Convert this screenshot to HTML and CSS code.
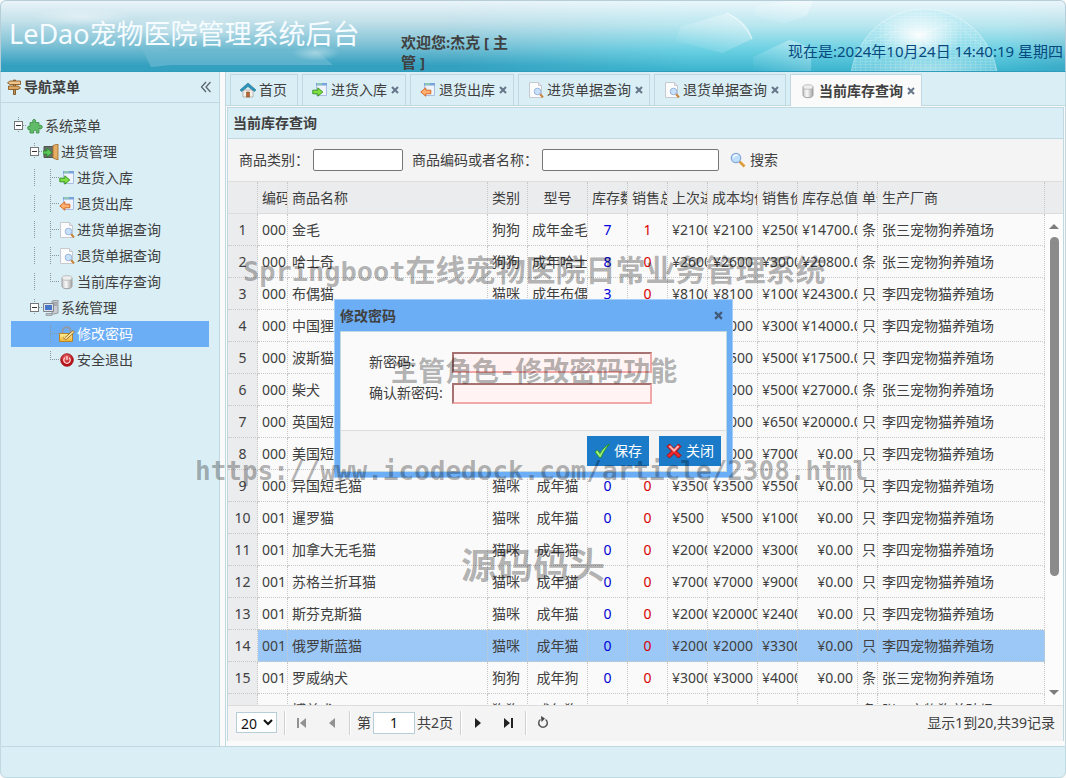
FILE: index.html
```html
<!DOCTYPE html>
<html lang="zh-CN">
<head>
<meta charset="utf-8">
<title>LeDao宠物医院管理系统后台</title>
<link rel="stylesheet" href="styles.css">
</head>
<body>
<svg class="defs" aria-hidden="true">
  <defs>
    <linearGradient id="g-cyl" x1="0" x2="1"><stop offset="0" stop-color="#c4c4c4"/><stop offset=".4" stop-color="#fafafa"/><stop offset="1" stop-color="#a2a2a2"/></linearGradient>
    <linearGradient id="g-lock" x1="0" y1="0" x2="0" y2="1"><stop offset="0" stop-color="#fff0a0"/><stop offset="1" stop-color="#eeb030"/></linearGradient>
    <radialGradient id="g-red" cx=".45" cy=".3"><stop offset="0" stop-color="#f07474"/><stop offset="1" stop-color="#b81018"/></radialGradient>
    <symbol id="i-sign" viewBox="0 0 16 16"><path d="M7.500 1h2v14.500h-2z" fill="#c89458" stroke="#704818" stroke-width=".8"/><path d="M4 2h10.500v3.500H4L1.500 3.800z" fill="#edc48a" stroke="#8a5a24" stroke-width=".9"/><path d="M2.500 7H12l2.500 1.800L12 10.500H2.500z" fill="#dca965" stroke="#8a5a24" stroke-width=".9"/></symbol>
    <symbol id="i-home" viewBox="0 0 16 16"><path d="M3 8h10v7H3z" fill="#f4f1ec" stroke="#b5b5b0"/><path d="M12 2h2v4h-2z" fill="#e8e8e8"/><path d="M8 1l8 7-1.500 1.500L8 4.500 1.500 9.500 0 8z" fill="#2c94b8" stroke="#1d7595" stroke-width=".6"/><path d="M6.500 10h3v5h-3z" fill="#b56b38" stroke="#8c4c1c" stroke-width=".6"/></symbol>
    <symbol id="i-in" viewBox="0 0 16 16"><path d="M4.500 1.500h10v12h-10z" fill="#eef3fc" stroke="#a9bfe2"/><path d="M4 1h11v2.500H4z" fill="#7aa2dd"/><path d="M5 1h5v2H5z" fill="#8cc8b0"/><path d="M.8 8.200h5V5.800l5 4.200-5 4.200v-2.400h-5z" fill="#80e040" stroke="#2a9018" stroke-width=".9"/></symbol>
    <symbol id="i-out" viewBox="0 0 16 16"><path d="M4.500 1.500h10v12h-10z" fill="#eef3fc" stroke="#a9bfe2"/><path d="M4 1h11v2.500H4z" fill="#7aa2dd"/><path d="M5 1h5v2H5z" fill="#8cc8b0"/><path d="M10.800 8.200h-5V5.800L.8 10l5 4.200v-2.400h5z" fill="#ffb070" stroke="#d2601a" stroke-width=".9"/></symbol>
    <symbol id="i-doc" viewBox="0 0 16 16"><path d="M1.500.5h9l3 3v12h-12z" fill="#fcfcfc" stroke="#c6cad0"/><path d="M10.500.5v3h3" fill="#e2e5e8" stroke="#c6cad0"/><path d="M12 12l3 3.500" stroke="#c9853c" stroke-width="2"/><circle cx="9.500" cy="9.500" r="3.300" fill="#bcdcfa" fill-opacity=".85" stroke="#9db4da"/></symbol>
    <symbol id="i-db" viewBox="0 0 16 16"><path d="M3 4v8c0 3.600 10 3.600 10 0V4z" fill="url(#g-cyl)" stroke="#a0a0a0"/><ellipse cx="8" cy="4" rx="5" ry="2.300" fill="#eeeeee" stroke="#b4b4b4" stroke-width=".8"/></symbol>
    <symbol id="i-plugin" viewBox="0 0 16 16"><path d="M3 4.500h3.200L5.500 2.500 7 1l1.800 1.500-.6 2H12v3.300l2-.8 1.500 2L14 11l-2-.6V15H9.200l.3-1.800L8 12l-1.500 1.200.3 1.800H3v-3.600l-1.500.5L.5 9.800 1.500 8l1.500.5z" fill="#62bb68" stroke="#388c42" stroke-width=".8" stroke-linejoin="round"/></symbol>
    <symbol id="i-door" viewBox="0 0 16 16"><path d="M1 2.500h10v11H1z" fill="#686e68" stroke="#4f544f"/><path d="M10 1.500l5-1.500v16l-5-2z" fill="#e5ae62" stroke="#9c6726" stroke-width=".8"/><path d="M0 7h4V4l5 4.500L4 13v-3H0z" fill="#5cc85c" stroke="#268a2a" stroke-width=".8"/></symbol>
    <symbol id="i-pc" viewBox="0 0 16 16"><path d="M9 1l6-1v13l-4 1H9z" fill="#c9ccd0" stroke="#85898f" stroke-width=".8"/><path d="M10 3h4M10 5h4" stroke="#84898f"/><path d="M.5 3.500h10v8H.5z" fill="#dfe3e8" stroke="#7e848c"/><path d="M2 5h7v5H2z" fill="#4777c8"/><path d="M3 13.500h6v2H3z" fill="#bcc0c5" stroke="#868b91" stroke-width=".6"/></symbol>
    <symbol id="i-lock" viewBox="0 0 16 16"><path d="M3.500 8V5c0-5 8-5 8 0v3" fill="none" stroke="#8f9aa4" stroke-width="1.800"/><path d="M.5 7.500h13v8H.5z" fill="url(#g-lock)" stroke="#b88424"/><path d="M4 11.500l2.500 2 1-.2L15.500 6l-1.500-1.500L6 11.500" fill="#ffe4a0" stroke="#8c6a20" stroke-width=".9"/></symbol>
    <symbol id="i-power" viewBox="0 0 16 16"><circle cx="8" cy="8" r="6.300" fill="url(#g-red)" stroke="#9c1016" stroke-width=".8"/><path d="M5.800 5.800a3.200 3.200 0 1 0 4.400 0M8 4v4" fill="none" stroke="#ffe0e0" stroke-width="1.200"/></symbol>
    <symbol id="i-search" viewBox="0 0 16 16"><path d="M9.500 9.500l5 5" stroke="#e09c3c" stroke-width="2.600"/><circle cx="6" cy="6" r="4.700" fill="#bfe0fd" stroke="#88aadc" stroke-width="1.300"/><path d="M3.300 5.500c.7-2 2.500-2.500 4-2.200" fill="none" stroke="#fff" stroke-width="1.200"/></symbol>
    <symbol id="i-ok" viewBox="0 0 16 16"><path d="M1 9l2.500-2 2.500 3.500C8 6.500 11 3.500 15.500 1 12 5 9 9.500 7 14.500H5.500z" fill="#a0f078" stroke="#1f9022" stroke-width=".9"/></symbol>
    <symbol id="i-no" viewBox="0 0 16 16"><path d="M3.500 1L8 5.500 12.500 1 15 3.500 10.500 8l4.500 4.500-2.500 2.500L8 10.500 3.500 15 1 12.500 5.500 8 1 3.500z" fill="#ee2a2a" stroke="#a00c12" stroke-linejoin="round"/><path d="M3.500 3L8 7.500 12.500 3" fill="none" stroke="#ffb4b4" stroke-width="2"/></symbol>
    <symbol id="i-x" viewBox="0 0 8 8"><path d="M1 1l6 6M7 1L1 7" stroke="currentColor" stroke-width="2"/></symbol>
  </defs>
</svg>

<div class="app">
  <header class="top">
    <svg class="haze" viewBox="0 0 360 70" aria-hidden="true">
      <defs>
        <radialGradient id="g-haze"><stop offset="0" stop-color="#fff" stop-opacity=".4"/><stop offset="1" stop-color="#fff" stop-opacity="0"/></radialGradient>
        <linearGradient id="g-band" x1="0" y1="0" x2="0" y2="1"><stop offset="0" stop-color="#fff" stop-opacity="0"/><stop offset="1" stop-color="#fff" stop-opacity=".2"/></linearGradient>
      </defs>
      <ellipse cx="80" cy="16" rx="50" ry="9" fill="url(#g-haze)"/>
      <ellipse cx="190" cy="28" rx="70" ry="14" fill="url(#g-haze)"/>
      <ellipse cx="315" cy="52" rx="24" ry="8" fill="url(#g-haze)"/>
      <path d="M140 46h14l12 4h150l16 14H170l-20 2z" fill="url(#g-band)"/>
    </svg>
    <svg class="art" viewBox="0 0 620 70" preserveAspectRatio="xMaxYMid slice" aria-hidden="true">
      <defs>
        <linearGradient id="g-sea" x1="0" y1="0" x2="0" y2="1"><stop offset="0" stop-color="#e9f6fb"/><stop offset=".35" stop-color="#b8e6ef"/><stop offset=".7" stop-color="#6ad0e2"/><stop offset="1" stop-color="#3cb4ce"/></linearGradient>
        <linearGradient id="g-fade"><stop offset="0" stop-color="#000"/><stop offset=".4" stop-color="#fff"/><stop offset=".9" stop-color="#fff"/><stop offset="1" stop-color="#777"/></linearGradient>
        <mask id="m-fade"><path d="M0 0h620v70H0z" fill="url(#g-fade)"/></mask>
        <radialGradient id="g-glow"><stop offset="0" stop-color="#fff" stop-opacity=".95"/><stop offset="1" stop-color="#fff" stop-opacity="0"/></radialGradient>
        <pattern id="p-grid" width="5" height="3" patternUnits="userSpaceOnUse"><path d="M0 .5h5M.5 0v3" stroke="#fff" stroke-opacity=".22" stroke-width=".6"/></pattern>
        <linearGradient id="g-rock" x1="1" y1="0" x2="0" y2="1"><stop offset="0" stop-color="#fff" stop-opacity=".4"/><stop offset="1" stop-color="#fff" stop-opacity="0"/></linearGradient>
      </defs>
      <g mask="url(#m-fade)">
        <path d="M0 0h620v70H0z" fill="url(#g-sea)"/>
        <path d="M235 26l47-14q22 9 25 26l-30 14-46-12z" fill="url(#g-rock)"/>
        <path d="M282 12q18 9 25 26" fill="none" stroke="#fff" stroke-opacity=".7"/>
        <path d="M310 5l30-5h28l-6 14-24 9-28-8z" fill="url(#g-rock)"/>
        <path d="M308 70V56l36-17q18 4 22 13v18z" fill="url(#g-rock)"/>
        <ellipse cx="479" cy="84" rx="74" ry="76" fill="#b4ecf4" fill-opacity=".4"/>
        <ellipse cx="479" cy="84" rx="74" ry="76" fill="url(#p-grid)" stroke="#fff" stroke-opacity=".4"/>
        <path d="M420 42l30-12 24 4 30-10M435 20l40 14 22 24 42-6M450 30l-20 30M474 34l-8 36M474 34l34-14 30 26" fill="none" stroke="#fff" stroke-opacity=".3" stroke-width=".7"/>
        <ellipse cx="474" cy="34" rx="44" ry="26" fill="url(#g-glow)"/>
        <ellipse cx="484" cy="70" rx="60" ry="18" fill="url(#g-glow)" fill-opacity=".4"/>
      </g>
    </svg>
    <h1>LeDao宠物医院管理系统后台</h1>
    <p class="welcome">欢迎您:杰克 [ 主管 ]</p>
    <p class="clock">现在是:2024年10月24日 14:40:19 星期四</p>
  </header>

  <div class="middle">
    <nav class="west">
      <div class="west-head">
        <svg class="icon"><use href="#i-sign"/></svg><h2>导航菜单</h2>
        <button class="collapse" aria-label="收起"><svg viewBox="0 0 12 12"><path d="M6 1L1.500 6 6 11M10.500 1L6 6l4.500 5" fill="none" stroke="#5c6670" stroke-width="1.300"/></svg></button>
      </div>
      <ul class="tree">
        <li><i class="hit"></i><svg class="icon"><use href="#i-plugin"/></svg><a href="#">系统菜单</a></li>
        <li><i class="gap"></i><i class="hit"></i><svg class="icon"><use href="#i-door"/></svg><a href="#">进货管理</a></li>
        <li><i class="gap"></i><i class="line"></i><i class="join"></i><svg class="icon"><use href="#i-in"/></svg><a href="#">进货入库</a></li>
        <li><i class="gap"></i><i class="line"></i><i class="join"></i><svg class="icon"><use href="#i-out"/></svg><a href="#">退货出库</a></li>
        <li><i class="gap"></i><i class="line"></i><i class="join"></i><svg class="icon"><use href="#i-doc"/></svg><a href="#">进货单据查询</a></li>
        <li><i class="gap"></i><i class="line"></i><i class="join"></i><svg class="icon"><use href="#i-doc"/></svg><a href="#">退货单据查询</a></li>
        <li><i class="gap"></i><i class="line"></i><i class="join end"></i><svg class="icon"><use href="#i-db"/></svg><a href="#">当前库存查询</a></li>
        <li><i class="gap"></i><i class="hit"></i><svg class="icon"><use href="#i-pc"/></svg><a href="#">系统管理</a></li>
        <li class="selected"><i class="gap"></i><i class="gap"></i><i class="join"></i><svg class="icon"><use href="#i-lock"/></svg><a href="#">修改密码</a></li>
        <li><i class="gap"></i><i class="gap"></i><i class="join end"></i><svg class="icon"><use href="#i-power"/></svg><a href="#">安全退出</a></li>
      </ul>
    </nav>

    <main class="center">
      <div class="tabs" role="tablist">
        <div class="tab"><button role="tab"><svg class="icon"><use href="#i-home"/></svg>首页</button></div>
        <div class="tab"><button role="tab"><svg class="icon"><use href="#i-in"/></svg>进货入库</button><button class="close" aria-label="关闭"><svg><use href="#i-x"/></svg></button></div>
        <div class="tab"><button role="tab"><svg class="icon"><use href="#i-out"/></svg>退货出库</button><button class="close" aria-label="关闭"><svg><use href="#i-x"/></svg></button></div>
        <div class="tab"><button role="tab"><svg class="icon"><use href="#i-doc"/></svg>进货单据查询</button><button class="close" aria-label="关闭"><svg><use href="#i-x"/></svg></button></div>
        <div class="tab"><button role="tab"><svg class="icon"><use href="#i-doc"/></svg>退货单据查询</button><button class="close" aria-label="关闭"><svg><use href="#i-x"/></svg></button></div>
        <div class="tab active"><button role="tab" aria-selected="true"><svg class="icon"><use href="#i-db"/></svg>当前库存查询</button><button class="close" aria-label="关闭"><svg><use href="#i-x"/></svg></button></div>
      </div>

      <section class="panel">
        <h2 class="panel-title">当前库存查询</h2>
        <form class="toolbar">
          <label for="type">商品类别：</label><input id="type" class="short" type="text">
          <label for="key">商品编码或者名称：</label><input id="key" class="long" type="text">
          <button type="button"><svg class="icon"><use href="#i-search"/></svg>搜索</button>
        </form>

        <div class="grid">
          <div class="grid-view">
            <table>
              <colgroup><col class="w30"><col class="w30"><col class="w200"><col class="w40"><col class="w60"><col class="w40"><col class="w40"><col class="w40"><col class="w50"><col class="w40"><col class="w60"><col class="w20"><col></colgroup>
              <thead>
                <tr><th></th><th>编码</th><th>商品名称</th><th>类别</th><th class="c">型号</th><th>库存数量</th><th>销售总数</th><th>上次进价</th><th>成本均价</th><th>销售价</th><th>库存总值</th><th>单位</th><th>生产厂商</th></tr>
              </thead>
              <tbody>
                <tr><td>1</td><td>000</td><td>金毛</td><td>狗狗</td><td>成年金毛</td><td>7</td><td>1</td><td>¥2100</td><td>¥2100</td><td>¥2500</td><td>¥14700.00</td><td>条</td><td>张三宠物狗养殖场</td></tr>
                <tr><td>2</td><td>000</td><td>哈士奇</td><td>狗狗</td><td>成年哈士奇</td><td>8</td><td>0</td><td>¥2600</td><td>¥2600</td><td>¥3000</td><td>¥20800.00</td><td>条</td><td>张三宠物狗养殖场</td></tr>
                <tr><td>3</td><td>000</td><td>布偶猫</td><td>猫咪</td><td>成年布偶猫</td><td>3</td><td>0</td><td>¥8100</td><td>¥8100</td><td>¥10000</td><td>¥24300.00</td><td>只</td><td>李四宠物猫养殖场</td></tr>
                <tr><td>4</td><td>000</td><td>中国狸花猫</td><td>猫咪</td><td>成年猫</td><td>7</td><td>0</td><td>¥2000</td><td>¥2000</td><td>¥3000</td><td>¥14000.00</td><td>只</td><td>李四宠物猫养殖场</td></tr>
                <tr><td>5</td><td>000</td><td>波斯猫</td><td>猫咪</td><td>成年猫</td><td>5</td><td>0</td><td>¥3500</td><td>¥3500</td><td>¥5000</td><td>¥17500.00</td><td>只</td><td>李四宠物猫养殖场</td></tr>
                <tr><td>6</td><td>000</td><td>柴犬</td><td>狗狗</td><td>成年狗</td><td>9</td><td>0</td><td>¥3000</td><td>¥3000</td><td>¥5000</td><td>¥27000.00</td><td>条</td><td>张三宠物狗养殖场</td></tr>
                <tr><td>7</td><td>000</td><td>英国短毛猫</td><td>猫咪</td><td>成年猫</td><td>4</td><td>0</td><td>¥5000</td><td>¥5000</td><td>¥6500</td><td>¥20000.00</td><td>只</td><td>李四宠物猫养殖场</td></tr>
                <tr><td>8</td><td>000</td><td>美国短毛猫</td><td>猫咪</td><td>成年猫</td><td>0</td><td>0</td><td>¥5000</td><td>¥5000</td><td>¥7000</td><td>¥0.00</td><td>只</td><td>李四宠物猫养殖场</td></tr>
                <tr><td>9</td><td>000</td><td>异国短毛猫</td><td>猫咪</td><td>成年猫</td><td>0</td><td>0</td><td>¥3500</td><td>¥3500</td><td>¥5500</td><td>¥0.00</td><td>只</td><td>李四宠物猫养殖场</td></tr>
                <tr><td>10</td><td>001</td><td>暹罗猫</td><td>猫咪</td><td>成年猫</td><td>0</td><td>0</td><td>¥500</td><td>¥500</td><td>¥1000</td><td>¥0.00</td><td>只</td><td>李四宠物猫养殖场</td></tr>
                <tr><td>11</td><td>001</td><td>加拿大无毛猫</td><td>猫咪</td><td>成年猫</td><td>0</td><td>0</td><td>¥2000</td><td>¥2000</td><td>¥3000</td><td>¥0.00</td><td>只</td><td>李四宠物猫养殖场</td></tr>
                <tr><td>12</td><td>001</td><td>苏格兰折耳猫</td><td>猫咪</td><td>成年猫</td><td>0</td><td>0</td><td>¥7000</td><td>¥7000</td><td>¥9000</td><td>¥0.00</td><td>只</td><td>李四宠物猫养殖场</td></tr>
                <tr><td>13</td><td>001</td><td>斯芬克斯猫</td><td>猫咪</td><td>成年猫</td><td>0</td><td>0</td><td>¥20000</td><td>¥20000</td><td>¥24000</td><td>¥0.00</td><td>只</td><td>李四宠物猫养殖场</td></tr>
                <tr class="selected"><td>14</td><td>001</td><td>俄罗斯蓝猫</td><td>猫咪</td><td>成年猫</td><td>0</td><td>0</td><td>¥2000</td><td>¥2000</td><td>¥3300</td><td>¥0.00</td><td>只</td><td>李四宠物猫养殖场</td></tr>
                <tr><td>15</td><td>001</td><td>罗威纳犬</td><td>狗狗</td><td>成年狗</td><td>0</td><td>0</td><td>¥3000</td><td>¥3000</td><td>¥4000</td><td>¥0.00</td><td>条</td><td>张三宠物狗养殖场</td></tr>
                <tr><td>16</td><td>001</td><td>博美犬</td><td>狗狗</td><td>成年狗</td><td>0</td><td>0</td><td>¥800</td><td>¥800</td><td>¥900</td><td>¥0.00</td><td>条</td><td>张三宠物狗养殖场</td></tr>
              </tbody>
            </table>
          </div>
          <div class="grid-side">
            <div class="corner"></div>
            <div class="scroll"><i class="up"></i><i class="thumb"></i><i class="down"></i></div>
          </div>
        </div>

        <div class="pager">
          <select aria-label="每页记录数"><option>20</option></select>
          <i class="sep"></i>
          <button aria-label="第一页" disabled><svg viewBox="0 0 16 16"><path d="M3 3h2v10H3zM12 3v10L6 8z"/></svg></button>
          <button aria-label="上一页" disabled><svg viewBox="0 0 16 16"><path d="M11 3v10L5 8z"/></svg></button>
          <i class="sep"></i>
          <label for="page">第</label><input id="page" type="text" value="1"><span>共2页</span>
          <i class="sep"></i>
          <button aria-label="下一页"><svg viewBox="0 0 16 16"><path d="M5 3v10l6-5z"/></svg></button>
          <button aria-label="最后一页"><svg viewBox="0 0 16 16"><path d="M4 3v10l6-5zM11 3h2v10h-2z"/></svg></button>
          <i class="sep"></i>
          <button aria-label="刷新"><svg viewBox="0 0 16 16"><path d="M5.500 4.500a4.300 4.300 0 1 0 5 0" fill="none" stroke="#555" stroke-width="1.500"/><path d="M6 1l4 2.500L6.500 7z" fill="#444"/></svg></button>
          <span class="count">显示1到20,共39记录</span>
        </div>
      </section>
    </main>
  </div>

  <footer class="south"></footer>
</div>

<form class="dialog" role="dialog" aria-labelledby="dlg-title">
  <div class="dialog-head"><h2 id="dlg-title">修改密码</h2><button type="button" class="close" aria-label="关闭窗口"><svg><use href="#i-x"/></svg></button></div>
  <div class="dialog-body">
    <label for="pw1">新密码:</label><input id="pw1" type="password">
    <label for="pw2">确认新密码:</label><input id="pw2" type="password">
  </div>
  <div class="dialog-foot">
    <button type="button"><svg class="icon"><use href="#i-ok"/></svg>保存</button>
    <button type="button"><svg class="icon"><use href="#i-no"/></svg>关闭</button>
  </div>
</form>

<div class="mark mark-a"><span>Springboot</span>在线宠物医院日常业务管理系统</div>
<div class="mark mark-b">主管角色-修改密码功能</div>
<div class="mark mark-c">https://www.icodedock.com/article/2308.html</div>
<div class="mark mark-d">源码码头</div>
</body>
</html>
```

FILE: styles.css
```css
* { box-sizing: border-box; }

body {
  margin: 0;
  overflow: hidden;
  background: #fafafa;
  color: #404040;
  font: 14px/20px "Noto Sans", "Noto Sans CJK SC", sans-serif;
}

h1, h2, p, ul { margin: 0; padding: 0; }
h2 { font-size: 14px; font-weight: 700; }
button, input, select { font: inherit; color: inherit; }
button { border: 0; padding: 0; background: none; }
a { color: inherit; text-decoration: none; }
.defs { position: absolute; width: 0; height: 0; }
.icon { width: 16px; height: 16px; flex: none; }

.app { display: flex; flex-direction: column; height: 100vh; }

.top {
  position: relative;
  display: flex;
  flex: none;
  height: 72px;
  border: 1px solid #b5ced8;
  border-bottom-color: #2f9cbc;
  border-radius: 6px 6px 0 0;
  overflow: hidden;
  background: linear-gradient(#eaf4f9, #c4e1ea 28%, #84c4d7 60%, #34a0c0 92%);
}
.art { position: absolute; top: 0; right: 0; width: 58%; height: 100%; }
.haze { position: absolute; top: 0; left: 0; width: 360px; height: 70px; }
.top > h1, .top > p { position: relative; }
.top h1 {
  width: 392px;
  padding: 13px 0 0 8px;
  font-size: 27px;
  line-height: 40px;
  font-weight: 400;
  color: #f6fcff;
  white-space: nowrap;
}
.welcome { width: 134px; padding: 31px 7px 0 8px; font-size: 15px; font-weight: 700; }
.clock { margin-left: auto; padding: 40px 2px 0 0; font-size: 15px; color: #064a80; white-space: nowrap; }

.middle { display: flex; flex: 1; min-height: 0; }

.west {
  width: 220px;
  flex: none;
  background: #daeef5;
  border: solid #c0d8e0;
  border-width: 0 1px;
}
.west-head {
  display: flex;
  align-items: center;
  gap: 2px;
  height: 31px;
  padding: 0 7px 0 5px;
  border-bottom: 1px solid #c0d8e0;
}
.collapse { margin-left: auto; width: 12px; height: 12px; display: flex; }

.tree { padding: 10px; list-style: none; }
.tree li { display: flex; align-items: center; height: 26px; }
.tree .icon { margin-right: 2px; }
.tree .selected { background: #6caef5; color: #fff; }
.tree i { width: 16px; height: 18px; flex: none; }
.hit {
  background:
    linear-gradient(#333, #333) 5px 8px / 5px 1px no-repeat,
    linear-gradient(#fff, #fff) 4px 5px / 7px 7px no-repeat,
    linear-gradient(#777, #777) 3px 4px / 9px 9px no-repeat,
    repeating-linear-gradient(90deg, #8a979c 0 1px, transparent 1px 2px) 12px 8px / 4px 1px no-repeat,
    repeating-linear-gradient(#8a979c 0 1px, transparent 1px 2px) 7px 0 / 1px 16px no-repeat;
}
.line { background: repeating-linear-gradient(#8a979c 0 1px, transparent 1px 2px) 7px 0 / 1px 18px no-repeat; }
.join {
  background:
    repeating-linear-gradient(90deg, #8a979c 0 1px, transparent 1px 2px) 7px 8px / 9px 1px no-repeat,
    repeating-linear-gradient(#8a979c 0 1px, transparent 1px 2px) 7px 0 / 1px 18px no-repeat;
}
.join.end {
  background:
    repeating-linear-gradient(90deg, #8a979c 0 1px, transparent 1px 2px) 7px 8px / 9px 1px no-repeat,
    repeating-linear-gradient(#8a979c 0 1px, transparent 1px 2px) 7px 0 / 1px 9px no-repeat;
}

.center {
  display: flex;
  flex-direction: column;
  flex: 1;
  min-width: 0;
  margin-left: 5px;
  border: solid #c0d8e0;
  border-width: 0 1px;
}
.tabs {
  display: flex;
  flex: none;
  gap: 4px;
  height: 34px;
  padding: 2px 4px 0;
  border-bottom: 1px solid #c0d8e0;
  background: #daeef5;
}
.tab {
  display: flex;
  align-items: center;
  gap: 4px;
  height: 31px;
  padding: 0 6px 0 9px;
  border: 1px solid #c0d8e0;
  border-bottom: 0;
}
.tab:first-child { padding-right: 10px; }
.tab.active { height: 32px; background: #fafafa; font-weight: 700; }
.tab button { display: flex; align-items: center; gap: 3px; white-space: nowrap; }
.close svg { width: 8px; height: 8px; color: #66758a; }

.panel {
  display: flex;
  flex-direction: column;
  flex: 1;
  min-height: 0;
  margin: 1px 1px 5px;
  border: 1px solid #c0d8e0;
  border-bottom: 0;
}
.panel-title { flex: none; height: 31px; padding: 0 5px; line-height: 30px; background: #daeef5; border-bottom: 1px solid #c0d8e0; }

.toolbar {
  display: flex;
  align-items: center;
  flex: none;
  height: 43px;
  padding: 0 11px;
  background: #f4f4f4;
  border-bottom: 1px solid #dddddd;
}
.toolbar input { height: 22px; border: 1px solid #767676; border-radius: 2px; background: #fff; }
.toolbar label { flex: none; }
.toolbar .short { width: 90px; margin: 0 9px 0 4px; }
.toolbar .long { width: 177px; margin: 0 11px 0 4px; }
.toolbar button { display: flex; align-items: center; gap: 4px; }

.grid { display: flex; flex: 1; min-height: 0; }
.grid-view { flex: 1; min-width: 0; overflow: hidden; }
table { width: 100%; table-layout: fixed; border-spacing: 0; }
.w20 { width: 20px; }
.w30 { width: 30px; }
.w40 { width: 40px; }
.w50 { width: 50px; }
.w60 { width: 60px; }
.w200 { width: 200px; }
th, td {
  height: 32px;
  padding: 0 4px;
  border: dotted #c8c8c8;
  border-width: 0 1px 1px 0;
  overflow: hidden;
  white-space: nowrap;
  font-weight: 400;
  text-align: left;
}
th { background: #ebecee; border-bottom: 1px solid #dddddd; }
th.c, td:first-child, td:nth-child(6), td:nth-child(7) { text-align: center; }
td:nth-child(5) { text-align: center; }
td:first-child { background: #ebecee; }
td:nth-child(6) { color: #0000d8; }
td:nth-child(7) { color: #d80000; }
td:nth-child(9), td:nth-child(11) { text-align: right; }
tr.selected td:not(:first-child) { background: #9cc8f7; }

.grid-side { display: flex; flex-direction: column; width: 18px; flex: none; }
.corner { height: 32px; background: #ebecee; border-bottom: 1px solid #dddddd; }
.scroll { display: flex; flex-direction: column; align-items: center; flex: 1; padding: 10px 0; background: #fcfcfc; }
.up, .down { border: 5px solid transparent; }
.up { border-top: 0; border-bottom-color: #7d7d7d; }
.down { margin-top: auto; border-bottom: 0; border-top-color: #7d7d7d; }
.thumb { width: 9px; height: 72%; margin-top: 8px; border-radius: 5px; background: #8b8b8b; }

.pager {
  display: flex;
  align-items: center;
  flex: none;
  height: 36px;
  padding: 0 8px 2px;
  background: #f4f4f4;
  border-top: 1px solid #dddddd;
}
.pager select { width: 41px; height: 21px; padding: 0; border: 1px solid #b5ced8; background: #fff; color: #111; }
.pager .sep { width: 2px; height: 24px; margin: 0 6px 0 7px; background: #d0d0d0; border-right: 1px solid #fff; }
.pager button { width: 20px; height: 20px; display: flex; align-items: center; justify-content: center; }
.pager button + button { margin-left: 10px; }
.pager button svg { width: 16px; height: 16px; fill: #222; }
.pager button:disabled svg { fill: #929292; }
.pager input { width: 42px; height: 22px; margin: 0 2px; border: 1px solid #b5ced8; background: #fff; color: #111; text-align: center; }
.count { margin-left: auto; }

.south { flex: none; height: 32px; background: #daeef5; border: 1px solid #c0d8e0; border-radius: 0 0 6px 6px; }

.dialog {
  position: absolute;
  left: 334px;
  top: 299px;
  width: 399px;
  padding: 0 5px 5px;
  border: 1px solid #a4cdf8;
  background: #6caef5;
}
.dialog-head { display: flex; align-items: center; justify-content: space-between; height: 31px; padding-right: 4px; }
.dialog-head .close { display: flex; padding: 0; }
.dialog-head .close svg { width: 9px; height: 9px; color: #435a78; }
.dialog-body {
  display: grid;
  grid-template-columns: 83px 200px;
  grid-auto-rows: 22px;
  align-items: center;
  gap: 9px 0;
  padding: 19px 28px 26px;
  border: 1px solid #c0d8e0;
  border-bottom: 0;
  background: #fafafa;
}
.dialog-body input { width: 100%; height: 21px; border: 2px solid #f0a8a8; border-color: #a87272 #f0a8a8 #f0a8a8 #a87272; background: #fff3f3; }
.dialog-foot {
  display: flex;
  justify-content: flex-end;
  gap: 10px;
  padding: 5px;
  border: 1px solid #c0d8e0;
  border-top-color: #dddddd;
  background: #f4f4f4;
}
.dialog-foot button { display: flex; align-items: center; gap: 4px; height: 30px; padding: 0 7px; background: #1b7bc9; color: #fff; }

.mark {
  position: absolute;
  color: rgba(0, 0, 0, .3);
  font-family: "DejaVu Sans Mono", "Noto Sans CJK SC", monospace;
  font-weight: 700;
  line-height: 40px;
  white-space: nowrap;
  pointer-events: none;
}
.mark-a { left: 243px; top: 251px; font-size: 30px; }
.mark-a span { font-size: 27px; }
.mark-b { left: 391px; top: 352px; font-size: 27px; }
.mark-c { left: 195px; top: 451px; font-size: 26px; }
.mark-d { left: 461px; top: 547px; font-size: 36px; }
```
